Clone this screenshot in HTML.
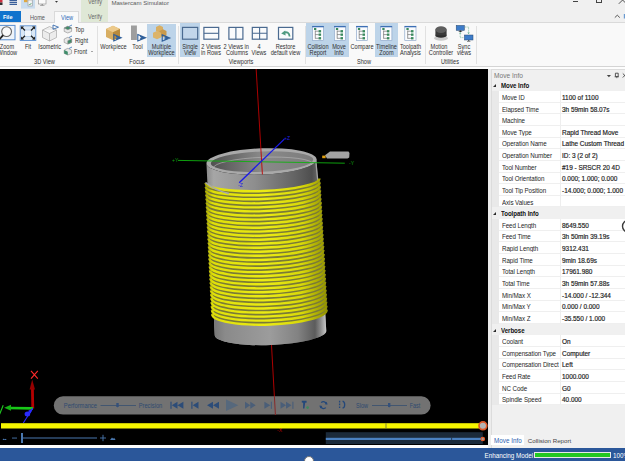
<!DOCTYPE html>
<html><head><meta charset="utf-8">
<style>
*{margin:0;padding:0;box-sizing:border-box}
html,body{width:625px;height:461px;overflow:hidden;background:#f0f0f0;font-family:"Liberation Sans",sans-serif;color:#262626}
.a{position:absolute}
.t{position:absolute;white-space:nowrap;font-size:6.6px;line-height:7px}
.c{text-align:center}
#ribbon{left:0;top:22px;width:625px;height:45px;background:#f9f9f9;border-top:1px solid #dadada;border-bottom:1px solid #d4d4d4}
.sep{position:absolute;top:26px;width:1px;height:38px;background:#e1e1e1}
.hl{position:absolute;background:#bdd4e9}
.rt{position:absolute;text-align:center;font-size:6.3px;line-height:6px;color:#2e2e2e;white-space:nowrap;transform:scaleX(0.89);transform-origin:50% 0}
.rt2{position:absolute;font-size:6.3px;line-height:6px;color:#2e2e2e;white-space:nowrap;transform:scaleX(0.89);transform-origin:0 0}
.glab{position:absolute;top:58px;font-size:6.6px;line-height:7px;color:#444;white-space:nowrap}
#vp{left:0;top:69px;width:488.6px;height:376px;background:#000;overflow:hidden}
#panel{left:488px;top:69px;width:137px;height:379px;background:#ececec}
#wstrip{left:0;top:67px;width:625px;height:2px;background:#fdfdfd}
.row{position:absolute;left:498.7px;width:126.3px;height:11.63px;background:#fff;border-bottom:1px solid #efefef}
.row span{position:absolute;top:2.75px;font-size:6.8px;line-height:7px;white-space:nowrap;color:#1e1e1e;letter-spacing:-0.08px;transform:scaleX(0.915);transform-origin:0 0}
.row .k{left:3.5px;width:64px;overflow:hidden}
.row .v{left:63.4px;letter-spacing:-0.02px;transform:scaleX(0.95);-webkit-text-stroke:0.18px #1e1e1e}
.row i{position:absolute;left:61.6px;top:0;width:1px;height:11px;background:#eeeeee}
.hdr{position:absolute;left:491.5px;width:133.5px;height:11.63px;background:#f0f0f0}
.hdr span{position:absolute;left:9.6px;top:2.75px;font-size:6.8px;line-height:7px;font-weight:bold;color:#111;white-space:nowrap;letter-spacing:-0.05px;transform:scaleX(0.9);transform-origin:0 0}
.hdr b{position:absolute;left:1.2px;top:4.9px;width:0;height:0;border-left:3.4px solid transparent;border-bottom:3.2px solid #2a2a2a}
#status{left:0;top:448px;width:625px;height:13px;background:#2b579a}
</style></head><body>
<!-- title bar -->
<div class="a" style="left:0;top:0;width:625px;height:22px;background:#f0f0f0"></div>
<svg class="a" style="left:0;top:0" width="64" height="11" viewBox="0 0 64 11">
<rect x="0" y="0" width="2.5" height="2.5" fill="#d03040"/><rect x="0" y="2.5" width="2.5" height="2.5" fill="#303030"/>
<rect x="9.5" y="0" width="7.5" height="1.2" fill="#3a5f9a"/><rect x="9.5" y="1.9" width="7.5" height="1.2" fill="#3a5f9a"/><rect x="9.5" y="3.8" width="7.5" height="1.2" fill="#3a5f9a"/>
<rect x="21" y="0" width="14" height="8.6" fill="#c8dcee"/>
<path d="M24,0 h3.5 v2.2 h-3.5z" fill="#e0a840"/>
<rect x="28" y="0" width="4.2" height="6" fill="#f4f4f4" stroke="#888" stroke-width="0.5"/><path d="M28.8,4 l1,1 l1.6,-2" stroke="#3a9a5a" stroke-width="0.7" fill="none"/>
<rect x="38.5" y="-1" width="7.5" height="5" fill="#fafafa" stroke="#8a8a8a" stroke-width="0.6"/><rect x="41.5" y="4.2" width="1.5" height="1.2" fill="#8a8a8a"/><rect x="40" y="5.2" width="4.5" height="0.6" fill="#8a8a8a"/>
<path d="M55,1 h3 l-1.5,1.8z" fill="#333"/>
</svg>
<div class="a" style="left:81px;top:0;width:27px;height:22px;background:#dfe8d6"></div>
<div class="t" style="left:87.5px;top:-1.6px;font-size:6.3px;color:#666;transform:scaleX(0.89);transform-origin:0 0">Verify</div>
<div class="t" style="left:87.5px;top:13.2px;font-size:6.3px;color:#666;transform:scaleX(0.89);transform-origin:0 0">Verify</div>
<div class="t" style="left:111.4px;top:-1.5px;font-size:6.1px;color:#5a5a5a">Mastercam Simulator</div>
<div class="a" style="left:572.8px;top:1px;width:5.4px;height:1px;background:#444"></div>
<div class="a" style="left:596px;top:-2px;width:5.5px;height:5px;border:0.9px solid #444"></div>
<svg class="a" style="left:618px;top:0" width="7" height="5" viewBox="618 0 7 5"><path d="M618.8,3.8 L626.4,-3.8 M618.8,-3.8 L626.4,3.8" stroke="#444" stroke-width="0.9"/></svg>
<!-- tabs -->
<div class="a" style="left:0;top:11px;width:21px;height:11px;background:#1173cd"></div>
<div class="t" style="left:2.9px;top:13.7px;font-size:5.6px;color:#fff;font-weight:bold">File</div>
<div class="t" style="left:30px;top:13.5px;font-size:6.3px;color:#555;transform:scaleX(0.89);transform-origin:0 0">Home</div>
<div class="a" style="left:54px;top:11px;width:25px;height:12px;background:#f9f9f9;border:1px solid #dadada;border-bottom:none;z-index:2"></div>
<div class="t" style="left:60.5px;top:13.5px;font-size:6.3px;color:#2a6ab8;z-index:3;transform:scaleX(0.89);transform-origin:0 0">View</div>
<svg class="a" style="left:612px;top:12px" width="13" height="8" viewBox="612 12 13 8"><path d="M614.8,17.6 L617.3,15.2 L619.8,17.6" fill="none" stroke="#444" stroke-width="0.9"/><rect x="623.8" y="14" width="1.5" height="4.5" fill="#6a9ad0"/></svg>
<!-- ribbon -->
<!--RIBBON-->
<div id="ribbon" class="a"></div>
<div class="sep" style="left:96.5px"></div>
<div class="sep" style="left:178px"></div>
<div class="sep" style="left:304.5px"></div>
<div class="sep" style="left:424.5px"></div>
<div class="sep" style="left:476.4px"></div>
<div class="hl" style="left:146.6px;top:23.5px;width:29.4px;height:33.3px"></div>
<div class="hl" style="left:180px;top:23.4px;width:20px;height:33.6px"></div>
<div class="hl" style="left:306px;top:23.4px;width:43px;height:33.6px"></div>
<div class="hl" style="left:374.7px;top:23.4px;width:23.1px;height:33.6px"></div>
<svg class="a" style="left:0;top:22px" width="480" height="36" viewBox="0 22 480 36">
<!-- zoom window -->
<rect x="-1" y="25.4" width="16" height="14.4" fill="#eef4fa" stroke="#5b8fd0" stroke-width="1"/>
<circle cx="6.6" cy="31.6" r="4.9" fill="#fafafa" stroke="#666" stroke-width="1.1"/>
<line x1="3.2" y1="35.2" x2="-0.5" y2="39.2" stroke="#222" stroke-width="1.9"/>
<!-- fit -->
<rect x="20.2" y="25.8" width="15.6" height="14.7" fill="#dbe8f5" stroke="#5b8fd0" stroke-width="0.9"/>
<rect x="24.5" y="30" width="7" height="6.3" fill="#f2f7fc" stroke="#9dbde0" stroke-width="0.6"/>
<path d="M21.5,27 L25,30.5 M34.5,27 L31,30.5 M21.5,39.2 L25,35.8 M34.5,39.2 L31,35.8" stroke="#222" stroke-width="1.3"/>
<path d="M21,26.6 h3 l-3,3z M35,26.6 h-3 l3,3z M21,39.6 h3 l-3,-3z M35,39.6 h-3 l3,-3z" fill="#222"/>
<!-- isometric -->
<path d="M42.5,30 L49.5,26.5 L56.5,30 L56.5,37.5 L49.5,41 L42.5,37.5 Z M42.5,30 L49.5,33.5 L56.5,30 M49.5,33.5 V41" fill="#ececec" stroke="#a8a8a8" stroke-width="0.7"/>
<path d="M53,25 L58.5,27.2 L53,29.3 Z" fill="none" stroke="#3a6db0" stroke-width="0.9"/>
<!-- top/right/front -->
<g stroke="#888" stroke-width="0.6">
<path d="M64.2,28 L67.8,26.3 L71.6,28 L71.6,31.4 L67.8,33 L64.2,31.4Z" fill="#e8e8e8"/><path d="M64.2,28 L67.8,26.3 L71.6,28 L67.8,29.7Z" fill="#3e8c6a"/>
<path d="M64.2,39 L67.8,37.3 L71.6,39 L71.6,42.4 L67.8,44 L64.2,42.4Z" fill="#e8e8e8"/><path d="M67.8,40.7 L71.6,39 L71.6,42.4 L67.8,44Z" fill="#3e8c6a"/>
</g>
<path d="M64.2,50 L67.8,48.3 L71.6,50 L71.6,53.4 L67.8,55 L64.2,53.4Z" fill="#e8e8e8" stroke="#888" stroke-width="0.6"/><path d="M64.2,50 L67.8,51.7 L67.8,55 L64.2,53.4Z" fill="#3e8c6a"/>
<path d="M69,26.5 l3,-1.5 M69,37.5 l3,-1.5 M69,48.5 l3,-1.5" stroke="#4a7fc0" stroke-width="0.9"/>
<!-- workpiece -->
<path d="M106,29 L113,25.8 L120,29 L120,37 L113,40.3 L106,37Z" fill="#d8ae62"/>
<path d="M106,29 L113,25.8 L120,29 L113,32.2Z" fill="#ecc98a"/>
<path d="M113,32.2 L120,29 L120,37 L113,40.3Z" fill="#b88a3c"/>
<path d="M113.8,34.6 L121.2,37.8 L113.8,41 Z M116,36.6 L118.6,37.8 L116,39" fill="none" stroke="#2f5f9a" stroke-width="1.1"/>
<!-- tool -->
<rect x="131" y="25.5" width="5.9" height="14.5" fill="#9e9e9e"/>
<path d="M137.8,34.6 L145.6,37.8 L137.8,41 Z M140,36.6 L142.8,37.8 L140,39" fill="none" stroke="#2f5f9a" stroke-width="1.1"/>
<!-- multiple workpiece -->
<path d="M156,27 L159.5,25.2 L163,27 L163,31 L159.5,32.8 L156,31Z" fill="#d8ae62"/>
<path d="M159.5,31 L163,29.2 L166.5,31 L166.5,35.5 L163,37.3 L159.5,35.5Z" fill="#c99a4c"/>
<path d="M153,32.8 L157,31 L161,32.8 L161,37.5 L157,39.3 L153,37.5Z" fill="#dcb46a"/>
<path d="M162.2,34.8 L169.8,38 L162.2,41.2 Z M164.4,36.8 L167,38 L164.4,39.2" fill="none" stroke="#2f5f9a" stroke-width="1.1"/>
<!-- viewports -->
<rect x="182.5" y="27.4" width="15.2" height="11.8" fill="#c2d6ea" stroke="#4a6a90" stroke-width="1.2"/>
<rect x="203.9" y="27.4" width="14.8" height="11.8" fill="#fafbfc" stroke="#4a6a90" stroke-width="1.2"/><line x1="203.9" y1="33.3" x2="218.7" y2="33.3" stroke="#4a6a90" stroke-width="1.1"/>
<rect x="228.9" y="27.4" width="14" height="11.8" fill="#fafbfc" stroke="#4a6a90" stroke-width="1.2"/><line x1="235.9" y1="27.4" x2="235.9" y2="39.2" stroke="#4a6a90" stroke-width="1.1"/>
<rect x="252.3" y="27.4" width="14.7" height="11.8" fill="#fafbfc" stroke="#4a6a90" stroke-width="1.2"/><path d="M259.6,27.4 V39.2 M252.3,33.3 H267" stroke="#4a6a90" stroke-width="1.1"/>
<rect x="278.5" y="27.4" width="14.3" height="11.8" fill="#fafbfc" stroke="#4a6a90" stroke-width="1.2"/><path d="M289.6,36.5 C289.4,32.8 287,31.6 284,32.6" fill="none" stroke="#4f9a80" stroke-width="1.8"/><path d="M281.2,33.6 L285.2,30.4 L285.6,35.4Z" fill="#4f9a80"/>
<!-- show icons -->
<g id="doc">
<rect x="312.4" y="26.2" width="11.2" height="14.4" fill="#fbfcfe" stroke="#7f9cc4" stroke-width="0.6"/><rect x="312.2" y="26" width="11.6" height="1.3" fill="#3d6fb5"/>
<path d="M315.3,30.5 V38.6 M315.3,31.2 H318.8 M315.3,34.6 H318.8 M315.3,38.3 H318.8" stroke="#5a5a5a" stroke-width="0.6" fill="none"/>
<rect x="314" y="28" width="2.3" height="2" fill="#3a8a5e"/><rect x="318.6" y="30.1" width="2.5" height="2.3" fill="#3a8a5e"/><rect x="318.6" y="33.5" width="2.5" height="2.3" fill="#3a8a5e"/><rect x="318.6" y="37.1" width="2.5" height="2.3" fill="#3a8a5e"/>
</g>
<use href="#doc" x="21.9"/><use href="#doc" x="43.9"/><use href="#doc" x="68.3"/><use href="#doc" x="92.4"/>
<!-- motion controller -->
<ellipse cx="441" cy="38.2" rx="6.8" ry="2.6" fill="#cacaca"/>
<ellipse cx="441" cy="35.4" rx="5.6" ry="2.4" fill="#2e2e2e"/>
<rect x="435.4" y="29.5" width="11.2" height="5.9" fill="#3a3a3a"/>
<ellipse cx="441" cy="29.6" rx="5.6" ry="3.4" fill="#5e5e5e"/>
<!-- sync views -->
<rect x="456.2" y="25.4" width="8.2" height="5" fill="#3d7cc9" stroke="#2a4a70" stroke-width="0.5"/>
<path d="M459.6,30.6 h1.6 v0.8 h1 v0.5 h-3.6 v-0.5 h1z" fill="#333"/>
<rect x="464.4" y="35" width="8.6" height="5" fill="#3d7cc9" stroke="#2a4a70" stroke-width="0.5"/>
<path d="M468,40.2 h1.4 v0.8 h1 v0.5 h-3.4 v-0.5 h1z" fill="#333"/>
<path d="M465,27 H468.6 V33.6 M460.2,32.8 V37.6 H463.8" fill="none" stroke="#5aaa88" stroke-width="0.6" stroke-dasharray="1 0.6"/>
<path d="M467.4,32.6 l1.2,1.4 l1.2,-1.4z M459,33.6 l1.2,-1.4 l1.2,1.4z" fill="#5aaa88"/>
</svg>
<div class="rt" style="left:-3px;top:43.95px;width:20px">Zoom</div>
<div class="rt" style="left:-4px;top:50.05px;width:22px">Window</div>
<div class="rt" style="left:18px;top:43.95px;width:20px">Fit</div>
<div class="rt" style="left:37.1px;top:43.95px;width:24px">Isometric</div>
<div class="rt2" style="left:74.9px;top:27.1px">Top</div>
<div class="rt2" style="left:74.9px;top:38px">Right</div>
<div class="rt2" style="left:74px;top:49.1px">Front</div>
<div class="a" style="left:90.5px;top:51.3px;border-left:1.3px solid transparent;border-right:1.3px solid transparent;border-top:1.5px solid #555"></div>
<div class="rt" style="left:30px;top:58.9px;width:29px">3D View</div>
<div class="rt" style="left:98px;top:43.95px;width:31px">Workpiece</div>
<div class="rt" style="left:127px;top:43.95px;width:21px">Tool</div>
<div class="rt" style="left:146px;top:43.95px;width:31px">Multiple</div>
<div class="rt" style="left:146px;top:50.05px;width:31px">Workpiece</div>
<div class="rt" style="left:125px;top:58.9px;width:24px">Focus</div>
<div class="rt" style="left:178px;top:43.95px;width:24px">Single</div>
<div class="rt" style="left:178px;top:50.05px;width:24px">View</div>
<div class="rt" style="left:199px;top:43.95px;width:24px">2 Views</div>
<div class="rt" style="left:199px;top:50.05px;width:24px">in Rows</div>
<div class="rt" style="left:222.2px;top:43.95px;width:28px">2 Views in</div>
<div class="rt" style="left:222.6px;top:50.05px;width:28px">Columns</div>
<div class="rt" style="left:247px;top:43.95px;width:24px">4</div>
<div class="rt" style="left:247px;top:50.05px;width:24px">Views</div>
<div class="rt" style="left:269.6px;top:43.95px;width:31px">Restore</div>
<div class="rt" style="left:267px;top:50.05px;width:37px">default view</div>
<div class="rt" style="left:226px;top:58.9px;width:30px">Viewports</div>
<div class="rt" style="left:305px;top:43.95px;width:26px">Collision</div>
<div class="rt" style="left:305px;top:50.05px;width:26px">Report</div>
<div class="rt" style="left:328px;top:43.95px;width:22px">Move</div>
<div class="rt" style="left:328px;top:50.05px;width:22px">Info</div>
<div class="rt" style="left:348px;top:43.95px;width:28px">Compare</div>
<div class="rt" style="left:373px;top:43.95px;width:27px">Timeline</div>
<div class="rt" style="left:373px;top:50.05px;width:27px">Zoom</div>
<div class="rt" style="left:397px;top:43.95px;width:27px">Toolpath</div>
<div class="rt" style="left:397px;top:50.05px;width:27px">Analysis</div>
<div class="rt" style="left:354px;top:58.9px;width:20px">Show</div>
<div class="rt" style="left:426px;top:43.95px;width:26px">Motion</div>
<div class="rt" style="left:426px;top:50.05px;width:30px">Controller</div>
<div class="rt" style="left:454px;top:43.95px;width:20px">Sync</div>
<div class="rt" style="left:454px;top:50.05px;width:20px">views</div>
<div class="rt" style="left:437px;top:58.9px;width:26px">Utilities</div>
<!--/RIBBON-->

<!-- viewport -->
<div id="wstrip" class="a"></div>
<div id="vp" class="a"></div>
<!--SCENE-->
<svg class="a" style="left:0;top:69px" width="489" height="376" viewBox="0 69 489 376">
<defs>
<linearGradient id="gbody" x1="0" x2="1" y1="0" y2="0">
<stop offset="0" stop-color="#8a8a8a"/><stop offset="0.06" stop-color="#a6a6a6"/><stop offset="0.4" stop-color="#8e8e8e"/><stop offset="0.75" stop-color="#626262"/><stop offset="0.88" stop-color="#4e4e4e"/><stop offset="1" stop-color="#8a8a8a"/>
</linearGradient>
<linearGradient id="gbot" x1="0" x2="1" y1="0" y2="0">
<stop offset="0" stop-color="#767676"/><stop offset="0.1" stop-color="#8a8a8a"/><stop offset="0.5" stop-color="#9c9c9c"/><stop offset="0.75" stop-color="#828282"/><stop offset="0.9" stop-color="#5c5c5c"/><stop offset="0.95" stop-color="#8c8c8c"/><stop offset="1" stop-color="#cacaca"/>
</linearGradient>
<linearGradient id="gyel" x1="0" x2="1" y1="0" y2="0">
<stop offset="0" stop-color="#a8a800"/><stop offset="0.06" stop-color="#e0e008"/><stop offset="0.5" stop-color="#ebeb14"/><stop offset="0.8" stop-color="#d8d808"/><stop offset="1" stop-color="#929200"/>
</linearGradient>
<linearGradient id="gin" x1="0" x2="1" y1="0" y2="0">
<stop offset="0" stop-color="#505050"/><stop offset="0.5" stop-color="#8a8a8a"/><stop offset="1" stop-color="#7c7c7c"/>
</linearGradient>
</defs>
<path d="M206.44,163.52 A55.10,13.10 -2.2 0 0 316.56,159.28 L326.26,330.86 A55.80,12.00 -2.2 0 1 214.74,335.14 Z" fill="url(#gbody)"/>
<line x1="315.6" y1="159" x2="318.2" y2="185" stroke="#a4a4a4" stroke-width="1.3"/>
<path d="M213.70,313.44 A55.70,12.50 -2.2 0 0 325.02,309.16 L326.26,330.86 A55.80,12.00 -2.2 0 1 214.74,335.14 Z" fill="url(#gbot)"/>
<path d="M205.05,182.81 A57.50,10.50 -2.2 0 0 319.96,178.39 L327.16,309.78 A57.80,12.50 -2.2 0 1 211.64,314.22 Z" fill="#7a7a38"/>
<path d="M205.55,182.79 A57.00,10.50 -2.2 0 0 319.46,178.41 M205.75,186.77 A57.01,10.56 -2.2 0 0 319.68,182.39 M205.95,190.75 A57.02,10.62 -2.2 0 0 319.90,186.37 M206.15,194.73 A57.03,10.68 -2.2 0 0 320.12,190.36 M206.35,198.72 A57.04,10.74 -2.2 0 0 320.34,194.34 M206.55,202.70 A57.05,10.80 -2.2 0 0 320.55,198.32 M206.75,206.68 A57.05,10.86 -2.2 0 0 320.77,202.30 M206.95,210.66 A57.06,10.92 -2.2 0 0 320.99,206.28 M207.15,214.65 A57.07,10.98 -2.2 0 0 321.21,210.26 M207.35,218.63 A57.08,11.05 -2.2 0 0 321.43,214.25 M207.55,222.61 A57.09,11.11 -2.2 0 0 321.64,218.23 M207.75,226.59 A57.10,11.17 -2.2 0 0 321.86,222.21 M207.95,230.57 A57.11,11.23 -2.2 0 0 322.08,226.19 M208.15,234.56 A57.12,11.29 -2.2 0 0 322.30,230.17 M208.35,238.54 A57.13,11.35 -2.2 0 0 322.52,234.15 M208.55,242.52 A57.14,11.41 -2.2 0 0 322.73,238.13 M208.75,246.50 A57.15,11.47 -2.2 0 0 322.95,242.12 M208.94,250.48 A57.15,11.53 -2.2 0 0 323.17,246.10 M209.14,254.47 A57.16,11.59 -2.2 0 0 323.39,250.08 M209.34,258.45 A57.17,11.65 -2.2 0 0 323.61,254.06 M209.54,262.43 A57.18,11.71 -2.2 0 0 323.82,258.04 M209.74,266.41 A57.19,11.77 -2.2 0 0 324.04,262.02 M209.94,270.40 A57.20,11.83 -2.2 0 0 324.26,266.00 M210.14,274.38 A57.21,11.89 -2.2 0 0 324.48,269.99 M210.34,278.36 A57.22,11.95 -2.2 0 0 324.70,273.97 M210.54,282.34 A57.23,12.02 -2.2 0 0 324.91,277.95 M210.74,286.32 A57.24,12.08 -2.2 0 0 325.13,281.93 M210.94,290.31 A57.25,12.14 -2.2 0 0 325.35,285.91 M211.14,294.29 A57.25,12.20 -2.2 0 0 325.57,289.89 M211.34,298.27 A57.26,12.26 -2.2 0 0 325.78,293.87 M211.54,302.25 A57.27,12.32 -2.2 0 0 326.00,297.86 M211.74,306.24 A57.28,12.38 -2.2 0 0 326.22,301.84 M211.94,310.22 A57.29,12.44 -2.2 0 0 326.44,305.82 M212.14,314.20 A57.30,12.50 -2.2 0 0 326.66,309.80" fill="none" stroke="url(#gyel)" stroke-width="2.4"/>
<ellipse cx="261.5" cy="161.4" rx="55.1" ry="13.1" fill="#a9a9a9" transform="rotate(-2.2 261.5 161.4)"/>
<ellipse cx="262" cy="161.6" rx="51.2" ry="10.2" fill="url(#gin)" transform="rotate(-2.2 261.5 161.4)"/>
<path d="M213.5,168 A49,8.6 -2.2 0 1 313,164" fill="none" stroke="#b8b8b8" stroke-width="0.6"/>
<path d="M205.5,182.5 Q214,190 229,193.6" fill="none" stroke="#a8a8a8" stroke-width="1.6"/>
<line x1="256.1" y1="68" x2="262.4" y2="174.4" stroke="#c00000" stroke-width="0.9"/>
<line x1="271.5" y1="345" x2="275.4" y2="414.8" stroke="#c00000" stroke-width="0.9"/>
<line x1="178" y1="160.4" x2="344.8" y2="163.2" stroke="#10b010" stroke-width="0.9"/>
<line x1="239.2" y1="182.8" x2="284.3" y2="139.1" stroke="#1a1ae8" stroke-width="1.3"/>
<text x="172" y="162" font-size="5" fill="#10a010" font-family="Liberation Sans">+Y</text>
<text x="349" y="165" font-size="5" fill="#10a010" font-family="Liberation Sans">-Y</text>
<text x="284" y="140" font-size="5" fill="#2020e0" font-family="Liberation Sans">+Z</text>
<text x="238" y="187" font-size="5" fill="#2020e0" font-family="Liberation Sans">-Z</text>
<text x="277" y="432" font-size="5" fill="#c00000" font-family="Liberation Sans">-X</text>
<polygon points="325,155.2 330,151.6 348.5,151.6 349.5,153 349.2,157.5 347.5,158.6 327,158.6" fill="#a3a3a3"/>
<rect x="322.2" y="155.6" width="3.4" height="2.6" fill="#e0a010"/>
</svg>

<!--/SCENE-->
<!--BOTTOM-->
<svg class="a" style="left:0;top:360px" width="489" height="88" viewBox="0 360 489 88">
<!-- triad -->
<line x1="32.8" y1="408.5" x2="32.4" y2="388" stroke="#b40000" stroke-width="2.8"/>
<path d="M29.6,389.5 L32.2,379.6 L35,389.5 Z" fill="#960000"/>
<path d="M31,370.8 L37.8,378.6 M37.8,370.8 L31,378.6" stroke="#ff2a2a" stroke-width="1.1"/>
<line x1="33" y1="408.4" x2="9" y2="408" stroke="#18c818" stroke-width="2.6"/>
<path d="M11,404.8 L4.2,407.8 L11,410.8 Z" fill="#14b014"/>
<path d="M-0.5,414.5 L3.2,405.3" stroke="#22d022" stroke-width="1.1"/>
<line x1="32.7" y1="408.3" x2="23.3" y2="423" stroke="#2a2aff" stroke-width="1.1"/>
<ellipse cx="27.4" cy="413.9" rx="2.8" ry="2.5" fill="#2a2aff"/>
<path d="M28,411 L33.3,408 L30.5,413.5Z" fill="#2a2aff"/>
<!-- playback bar -->
<rect x="53.8" y="396.2" width="376.8" height="18.4" rx="9.2" fill="#727272"/>
<text x="63.8" y="407.9" font-family="Liberation Sans" font-size="6.6" fill="#2e4a70" textLength="33.2" lengthAdjust="spacingAndGlyphs">Performance</text>
<line x1="100.5" y1="405.5" x2="136" y2="405.5" stroke="#2e4a70" stroke-width="0.7"/>
<path d="M116.3,403 h2.4 v3.3 l-1.2,1.3 l-1.2,-1.3z" fill="#34507a"/>
<text x="138.7" y="407.9" font-family="Liberation Sans" font-size="6.6" fill="#2e4a70" textLength="23.6" lengthAdjust="spacingAndGlyphs">Precision</text>
<g fill="#2c4c78">
<rect x="170.4" y="401.7" width="1.2" height="7.1"/><path d="M171.8,405.2 L177.5,401.7 V408.8Z M177.5,405.2 L183.4,401.7 V408.8Z"/>
<rect x="191.3" y="401.7" width="1.2" height="7.1"/><path d="M192.7,405.2 L198.5,401.7 V408.8Z"/>
<path d="M207,405.2 L213,401.7 V408.8Z M213,405.2 L219,401.7 V408.8Z"/>
</g>
<path d="M226,399.5 L238.4,405.2 L226,411Z" fill="#56687c"/>
<g fill="#4a5e78">
<path d="M245,401.7 L250.3,405.2 L245,408.8Z M250.3,401.7 L255.7,405.2 L250.3,408.8Z"/>
<path d="M264.4,401.7 L270.3,405.2 L264.4,408.8Z"/><rect x="270.8" y="401.7" width="1.2" height="7.1"/>
<path d="M280.5,401.7 L286,405.2 L280.5,408.8Z M286,401.7 L291.5,405.2 L286,408.8Z"/><rect x="292.3" y="401.7" width="1.2" height="7.1"/>
</g>
<path d="M301.8,400.8 h4.6 l0.4,1.6 l-1.6,0.4 l-0.8,5.8 h-1.4 l0.2,-5.8 l-1.4,-0.4z" fill="#24487a"/>
<circle cx="307.6" cy="407.6" r="1.3" fill="#3a8a5a"/>
<g fill="none" stroke="#24487a" stroke-width="1.3">
<path d="M321.2,402.6 A3.2,3.2 0 0 1 326.6,404.2"/><path d="M325.8,407.6 A3.2,3.2 0 0 1 320.4,406"/>
<path d="M339.6,400.8 v1.6 M339.6,403.6 v1.6 M339.6,406.4 v1.6 M342.6,401.2 c2.8,0.8 2.8,6.2 0,7"/>
</g>
<path d="M326.6,401.8 l1,2.8 l-2.8,-0.4z M320.4,408.4 l-1,-2.8 l2.8,0.4z" fill="#24487a"/>
<text x="356" y="407.9" font-family="Liberation Sans" font-size="6.6" fill="#2e4a70" textLength="12" lengthAdjust="spacingAndGlyphs">Slow</text>
<line x1="372" y1="405.5" x2="407" y2="405.5" stroke="#2e4a70" stroke-width="0.7"/>
<path d="M388,403 h2.4 v3.3 l-1.2,1.3 l-1.2,-1.3z" fill="#34507a"/>
<text x="409.8" y="407.9" font-family="Liberation Sans" font-size="6.6" fill="#2e4a70" textLength="10.4" lengthAdjust="spacingAndGlyphs">Fast</text>
<line x1="274.4" y1="396.2" x2="275.4" y2="414.8" stroke="#8a2020" stroke-width="0.9"/>
<!-- yellow timeline -->
<rect x="1" y="423.2" width="480" height="5.3" fill="#f5f500"/>
<rect x="385.6" y="423.2" width="0.8" height="5.3" fill="#6a6a40"/>
<circle cx="482.9" cy="425.8" r="3.9" fill="#b4b4b4" stroke="#e05a2a" stroke-width="1.7"/>
<!-- lower bar -->
<rect x="325.8" y="432.2" width="157" height="11.8" fill="#1b2a3a"/>
<rect x="325.8" y="437.8" width="157" height="2.2" fill="#4a80c0"/>
<rect x="451.3" y="437.8" width="0.8" height="2.2" fill="#1b2a3a"/>
<circle cx="482.8" cy="439" r="1.7" fill="#a0a0a0" stroke="#e05a2a" stroke-width="1.2"/>
<!-- zoom slider -->
<path d="M2.5,440 l1.2,-1.5 l1,1 l0.8,-0.8 l1.3,1.3z" fill="#4a78b0"/>
<rect x="12" y="437.6" width="5" height="0.9" fill="#4a78b0"/>
<rect x="21" y="433" width="2" height="10" fill="#4a78b0"/>
<rect x="23" y="437.5" width="74" height="1" fill="#4a78b0"/>
<path d="M100,438 h6 M103,434.8 v6.4" stroke="#4a78b0" stroke-width="0.9"/>
<path d="M110,440 l2,-2.5 l1.2,1.2 l0.9,-0.9 l1.5,2.2z" fill="#4a78b0"/>
</svg>
<div class="a" style="left:0;top:445px;width:489px;height:3px;background:#fdfdfd"></div>
<!--/BOTTOM-->

<!-- panel -->
<div id="panel" class="a"></div>
<div class="a" style="left:491px;top:69px;width:134px;height:379px;background:#f0f0f0;border-left:1px solid #dcdcdc;border-top:1px solid #dcdcdc"></div>
<div class="t" style="left:494px;top:72px;color:#777">Move Info</div>
<div class="a" style="left:491.5px;top:80px;width:7.2px;height:325px;background:#e9e9e9"></div>
<!--ROWS-->
<div class="hdr" style="top:79.55px"><b></b><span>Move Info</span></div>
<div class="row" style="top:91.18px"><span class="k">Move ID</span><i></i><span class="v">1100 of 1100</span></div>
<div class="row" style="top:102.81px"><span class="k">Elapsed Time</span><i></i><span class="v">3h 59min 58.07s</span></div>
<div class="row" style="top:114.44px"><span class="k">Machine</span><i></i><span class="v"></span></div>
<div class="row" style="top:126.07px"><span class="k">Move Type</span><i></i><span class="v">Rapid Thread Move</span></div>
<div class="row" style="top:137.70px"><span class="k">Operation Name</span><i></i><span class="v">Lathe Custom Thread</span></div>
<div class="row" style="top:149.33px"><span class="k">Operation Number</span><i></i><span class="v">ID: 3 (2 of 2)</span></div>
<div class="row" style="top:160.96px"><span class="k">Tool Number</span><i></i><span class="v">#19 - SRSCR 20 4D</span></div>
<div class="row" style="top:172.59px"><span class="k">Tool Orientation</span><i></i><span class="v">0.000; 1.000; 0.000</span></div>
<div class="row" style="top:184.22px"><span class="k">Tool Tip Position</span><i></i><span class="v">-14.000; 0.000; 1.000</span></div>
<div class="row" style="top:195.85px"><span class="k">Axis Values</span><i></i><span class="v"></span></div>
<div class="hdr" style="top:207.48px"><b></b><span>Toolpath Info</span></div>
<div class="row" style="top:219.11px"><span class="k">Feed Length</span><i></i><span class="v">8649.550</span></div>
<div class="row" style="top:230.74px"><span class="k">Feed Time</span><i></i><span class="v">3h 50min 39.19s</span></div>
<div class="row" style="top:242.37px"><span class="k">Rapid Length</span><i></i><span class="v">9312.431</span></div>
<div class="row" style="top:254.00px"><span class="k">Rapid Time</span><i></i><span class="v">9min 18.69s</span></div>
<div class="row" style="top:265.63px"><span class="k">Total Length</span><i></i><span class="v">17961.980</span></div>
<div class="row" style="top:277.26px"><span class="k">Total Time</span><i></i><span class="v">3h 59min 57.88s</span></div>
<div class="row" style="top:288.89px"><span class="k">Min/Max X</span><i></i><span class="v">-14.000 / -12.344</span></div>
<div class="row" style="top:300.52px"><span class="k">Min/Max Y</span><i></i><span class="v">0.000 / 0.000</span></div>
<div class="row" style="top:312.15px"><span class="k">Min/Max Z</span><i></i><span class="v">-35.550 / 1.000</span></div>
<div class="hdr" style="top:323.78px"><b></b><span>Verbose</span></div>
<div class="row" style="top:335.41px"><span class="k">Coolant</span><i></i><span class="v">On</span></div>
<div class="row" style="top:347.04px"><span class="k">Compensation Type</span><i></i><span class="v">Computer</span></div>
<div class="row" style="top:358.67px"><span class="k">Compensation Direct</span><i></i><span class="v">Left</span></div>
<div class="row" style="top:370.30px"><span class="k">Feed Rate</span><i></i><span class="v">1000.000</span></div>
<div class="row" style="top:381.93px"><span class="k">NC Code</span><i></i><span class="v">G0</span></div>
<div class="row" style="top:393.56px"><span class="k">Spindle Speed</span><i></i><span class="v">40.000</span></div>

<!--/ROWS-->
<svg class="a" style="left:600px;top:69px" width="25" height="12" viewBox="600 69 25 12">
<path d="M606.8,75 h4.2 l-2.1,2.2z" fill="#444"/>
<path d="M615.4,73.2 h2.8 v3.4 h-2.8z" fill="none" stroke="#444" stroke-width="0.9"/><path d="M614.6,76.8 h4.4 M616.8,76.8 v1.4" stroke="#444" stroke-width="0.7"/>
<path d="M622.8,73.5 l4,4 M626.8,73.5 l-4,4" stroke="#444" stroke-width="0.9"/>
</svg>
<svg class="a" style="left:615px;top:215px" width="10" height="22" viewBox="615 215 10 22"><circle cx="628.5" cy="226.2" r="6" fill="none" stroke="#3a3a3a" stroke-width="1.4"/></svg>

<!-- status -->
<!--STATUS-->
<div id="status" class="a"></div>
<div class="a" style="left:491px;top:435px;width:134px;height:10px;background:#f0f0f0"></div>
<div class="a" style="left:491px;top:434.5px;width:33px;height:10.5px;background:#fff"></div>
<div class="t" style="left:494px;top:437px;font-size:6.3px;color:#2d62b0">Move Info</div>
<div class="t" style="left:527.8px;top:437px;font-size:6.15px;color:#444">Collision Report</div>
<div class="t" style="left:484.6px;top:451.5px;font-size:6.3px;color:#fff">Enhancing Model</div>
<div class="a" style="left:533.8px;top:452px;width:77.2px;height:5.6px;background:#22c822;border:0.8px solid #e8e8e8"></div>
<div class="t" style="left:613px;top:451.5px;font-size:6.3px;color:#fff">100%</div>
<div class="a" style="left:304px;top:456px;width:10px;height:10px;border-radius:50%;background:#fff;border:1px solid #777"></div>
<!--/STATUS-->
</body></html>
